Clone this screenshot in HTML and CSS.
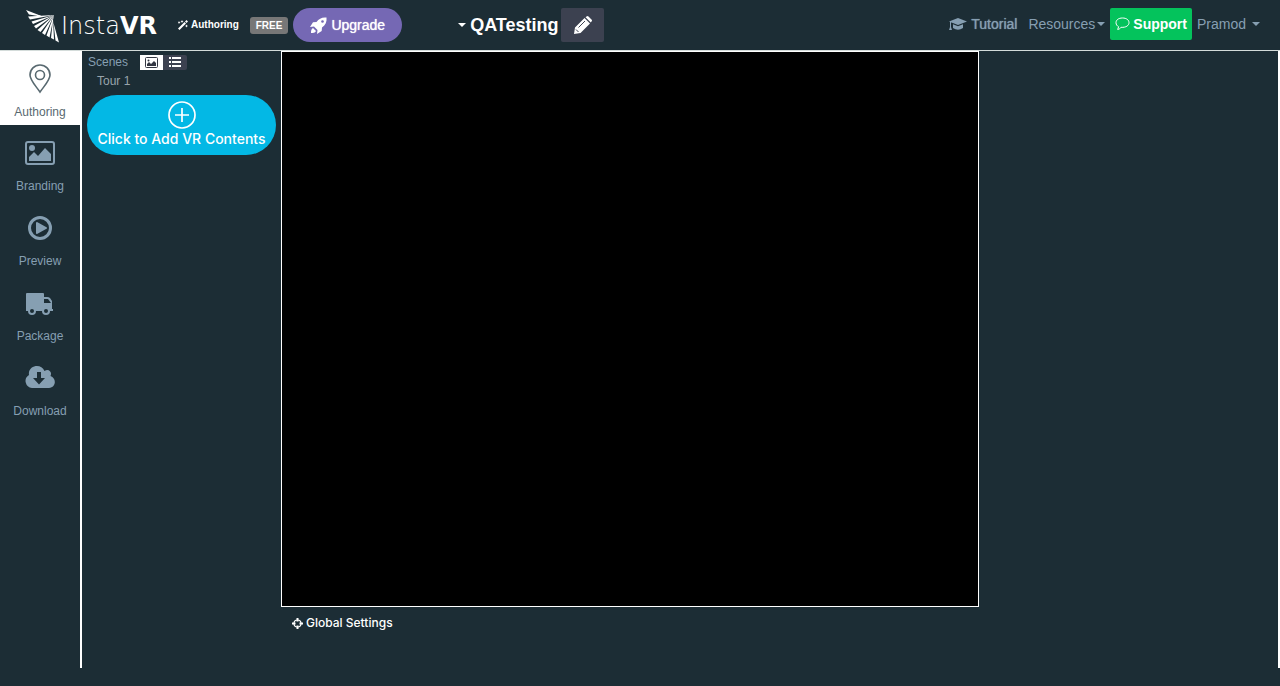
FILE: index.html
```html
<!DOCTYPE html>
<html lang="en">
<head>
<meta charset="utf-8">
<title>InstaVR - Authoring</title>
<link rel="stylesheet" href="styles.css">
</head>
<body>
<header class="topbar">
  <a class="logo" href="#" aria-label="InstaVR">
    <svg width="34" height="34" viewBox="0 0 34 34" fill="#fff"><path d="M0 1 18 8 3 5.500zM2 7.500 28 6 4 10.500zM5.500 12.500 28 6 7 15zM8 17 28 6 10 19.500zM11.500 21 28 6 14.500 23zM16 24 28 6 19 26zM20.500 26.500 28 6 23.500 28.500zM25 29 27 10 28 30.500zM27.500 14 33 33.500 29.500 31.500z"/></svg>
    <span class="logo-text">Insta<b>VR</b></span>
  </a>
  <span class="mode">
    <svg width="10" height="10" viewBox="0 0 20 20" fill="#fff"><path d="M0 17 13 4l3 3L3 20zM14 3l3-3 3 3-3 3zM8 0l1 2 2 1-2 1-1 2-1-2-2-1 2-1zM2 2l1 2 2 1-2 1-1 2-1-2-1-1 1-1zM17 9l1 2 2 1-2 1-1 2-1-2-2-1 2-1z"/></svg>
    Authoring</span>
  <span class="badge">FREE</span>
  <button class="upgrade" type="button">
    <svg width="17" height="17" viewBox="0 0 17 17"><path fill="#fff" d="M16.500.500C12 0 9 1.500 6.500 5L3 5.300 0 10l4-.500L7.500 13 7 17l4.700-3 .300-3.500C15.500 8 17 5 16.500.500zM3 11l3 3c-1 2-3 2-5 2 0-2 0-4 2-5z"/><circle cx="12.500" cy="4.500" r="1.300" fill="#7568b4"/></svg>
    Upgrade</button>
  <div class="project">
    <button class="project-name" type="button"><i class="caret"></i>QATesting</button>
    <button class="edit" type="button" aria-label="Rename">
      <svg width="18" height="18" viewBox="0 0 18 18"><path fill="#fff" d="M0 18l1-6.500L10.500 2 16 7.500 6.500 17zM11.500 1.200 12.500.500q1-1 2 0l3 3q1 1 0 2l-.700 1z"/><path d="M2 13.500l2.500 2.500M4.500 11.500l6.500-6.500" stroke="#3c4150" fill="none"/></svg>
    </button>
  </div>
  <nav class="account">
    <a class="tutorial" href="#"><svg width="18" height="13" viewBox="0 0 18 13" fill="#869fb2"><path d="M9 0l9 3.500L9 7 0 3.500zM4 6.300 9 8.200l5-1.900V10q-5 3.500-10 0zM1 4h1v5l1 3H0l1-3z"/></svg>Tutorial</a>
    <a class="resources" href="#">Resources<i class="caret"></i></a>
    <a class="support" href="#"><svg width="15" height="14" viewBox="0 0 15 14"><path d="M7.500 1C3.500 1 1 3 1 5.700c0 2 1.200 3.300 2.600 4L2.700 12.500c1.600-.300 2.800-1.200 3.400-2.200C11 10.700 14 8.500 14 5.700 14 3 11.500 1 7.500 1z" fill="none" stroke="#fff"/></svg>Support</a>
    <a class="user" href="#">Pramod<i class="caret"></i></a>
  </nav>
</header>
<div class="body">
  <nav class="sidebar">
    <a class="step active" href="#"><svg width="22" height="30" viewBox="0 0 22 30" fill="none" stroke="#586970" stroke-width="1.600"><path d="M11 28C6 21 1 16 1 11a10 10 0 0 1 20 0c0 5-5 10-10 17z"/><circle cx="11" cy="11" r="4.500"/></svg>Authoring</a>
    <a class="step" href="#"><svg width="30" height="30" viewBox="0 0 30 30"><rect x="1" y="4" width="28" height="22" rx="2" fill="none" stroke="#869fb2" stroke-width="2"/><circle cx="7" cy="10" r="3" fill="#869fb2"/><path d="M4 23v-4l5-5 4 4 7-8 6 6v7z" fill="#869fb2"/></svg>Branding</a>
    <a class="step" href="#"><svg width="30" height="30" viewBox="0 0 30 30"><circle cx="15" cy="15" r="10.500" fill="none" stroke="#869fb2" stroke-width="3"/><path d="M12 10l9 5-9 5z" fill="#869fb2" stroke="#869fb2" stroke-width="2" stroke-linejoin="round"/></svg>Preview</a>
    <a class="step" href="#"><svg width="30" height="30" viewBox="0 0 30 30"><path d="M1 6q0-1 1-1h16q1 0 1 1v3h3q2 0 3 1l2 3v8h1v2H1z" fill="#869fb2"/><path d="M19 11h4l3 4h-7z" fill="#1c2d35"/><circle cx="7" cy="23" r="4" fill="#869fb2"/><circle cx="21" cy="23" r="4" fill="#869fb2"/><circle cx="7" cy="23" r="2" fill="#1c2d35"/><circle cx="21" cy="23" r="2" fill="#1c2d35"/></svg>Package</a>
    <a class="step" href="#"><svg width="30" height="30" viewBox="0 0 30 30"><path d="M7 25a7 7 0 0 1-3-13C3 6 8 3 12 3q5 0 7.500 5c4-3 8 1 6 5 6 2 6 11-1.500 12z" fill="#869fb2"/><path d="M12 9h4v6h4l-6 6.500L8 15h4z" fill="#1c2d35"/></svg>Download</a>
  </nav>
  <main class="workspace">
    <section class="scenes">
      <div class="scenes-head">
        <span>Scenes</span>
        <div class="views">
          <button class="view selected" type="button" aria-label="Thumbnails"><svg width="13" height="11" viewBox="0 0 13 11"><rect x=".500" y=".500" width="12" height="10" rx="1" fill="none" stroke="#333743"/><path d="M2 9V7l2-2 2 2 3-3 2 2v3z" fill="#333743"/><circle cx="3.500" cy="3.500" r="1" fill="#333743"/></svg></button>
          <button class="view" type="button" aria-label="List"><svg width="12" height="10" viewBox="0 0 12 10" fill="#fff"><path d="M0 0h2v2H0zM3 0h9v2H3zM0 4h2v2H0zM3 4h9v2H3zM0 8h2v2H0zM3 8h9v2H3z"/></svg></button>
        </div>
      </div>
      <div class="tour">Tour 1</div>
      <button class="add" type="button"><svg width="28" height="28" viewBox="0 0 28 28" fill="none" stroke="#fff" stroke-width="1.700"><circle cx="14" cy="14" r="13"/><path d="M14 7v14M7 14h14"/></svg>Click to Add VR Contents</button>
    </section>
    <section class="stage">
      <div class="canvas"></div>
      <button class="global" type="button"><svg width="11" height="11" viewBox="0 0 11 11"><circle cx="5.500" cy="5.500" r="3.500" fill="none" stroke="#fff" stroke-width="1.200"/><path d="M5.500 0v3.500M5.500 7.500V11M0 5.500h3.500M7.500 5.500H11" stroke="#fff" stroke-width="2"/></svg>Global Settings</button>
    </section>
    <aside class="panel"></aside>
  </main>
</div>
</body>
</html>
```
FILE: styles.css
```css
* { box-sizing: border-box; }
body {
  margin: 0;
  min-height: 100vh;
  display: flex;
  flex-direction: column;
  background: #1c2d35;
  color: #869fb2;
  font: 14px/20px "Liberation Sans", Arial, sans-serif;
}
a { color: inherit; text-decoration: none; }
button { border: 0; padding: 0; margin: 0; background: none; color: #fff; font: inherit; cursor: pointer; }
svg { display: block; flex: none; }
.caret { border: 4px solid transparent; border-top-color: currentColor; border-bottom: 0; }

.topbar {
  display: flex;
  align-items: center;
  height: 51px;
  padding: 0 20px 0 26px;
  border-bottom: 1px solid #d4dcda;
}
.logo { display: flex; align-items: center; gap: 1px; width: 152px; padding-top: 2px; color: #fff; }
.logo-text { font: 200 24px/30px "DejaVu Sans", sans-serif; }
.logo-text b { font-weight: 700; }
.mode { display: flex; align-items: center; gap: 3px; color: #fff; font-size: 10px; font-weight: 700; }
.badge {
  margin: 0 5px 0 11px;
  padding: 0 6px;
  border-radius: 3px;
  background: #777;
  color: #fff;
  font-size: 10px;
  font-weight: 700;
  line-height: 17px;
}
.upgrade {
  display: flex;
  align-items: center;
  gap: 4px;
  height: 34px;
  padding: 0 17px;
  border-radius: 17px;
  background: #7568b4;
  text-shadow: 0 0 1px currentColor;
}
.project { display: flex; align-items: center; gap: 3px; margin-left: 56px; }
.project-name { display: flex; align-items: center; gap: 4px; font-size: 18px; font-weight: 700; }
.edit { display: grid; place-items: center; width: 43px; height: 34px; border-radius: 2px; background: #3c4150; }
.account { display: flex; align-items: center; margin-left: auto; padding-bottom: 2px; }
.account a { display: flex; align-items: center; }
.tutorial { gap: 4px; margin-right: 11px; text-shadow: 0 0 1px currentColor; }
.resources { gap: 2px; margin-right: 5px; }
.account .support {
  gap: 3px;
  height: 32px;
  margin-right: 5px;
  padding: 0 5px;
  border-radius: 2px;
  background: #04c35c;
  color: #fff;
  font-weight: 700;
}
.user { gap: 6px; }

.body { display: flex; flex: 1; margin-bottom: 18px; }
.sidebar { flex: none; width: 80px; }
.step {
  display: flex;
  flex-direction: column;
  align-items: center;
  gap: 8px;
  height: 75px;
  padding-top: 13px;
  font-size: 12px;
}
.active { height: 74px; background: #fff; color: #586970; }
.workspace { display: flex; flex: 1; border: solid #fff; border-width: 0 2px; }
.scenes { flex: none; width: 199px; padding: 3px 5px 0; }
.scenes-head { display: flex; align-items: center; gap: 12px; height: 16px; padding-left: 1px; font-size: 12px; }
.views { display: flex; }
.view { display: grid; place-items: center; width: 23px; height: 15px; background: #fff; }
.view + .view { width: 24px; background: #3c4150; border-radius: 0 2px 2px 0; }
.tour { padding: 1px 0 4px 10px; font-size: 12px; color: #98a4ac; }
.add {
  display: flex;
  flex-direction: column;
  align-items: center;
  width: 100%;
  height: 60px;
  padding-top: 6px;
  border-radius: 30px;
  background: #03b8e5;
  font: 500 14px/20px Inter, sans-serif;
  white-space: nowrap;
}
.stage { display: flex; flex-direction: column; align-items: flex-start; flex: 7; }
.canvas { width: 100%; flex: 1; border: 1px solid #fff; background: #000; }
.global { display: flex; align-items: center; gap: 3px; height: 32px; margin-bottom: 29px; padding-left: 11px; font: 500 12px/16px Inter, sans-serif; }
.panel { flex: 3; }
```
